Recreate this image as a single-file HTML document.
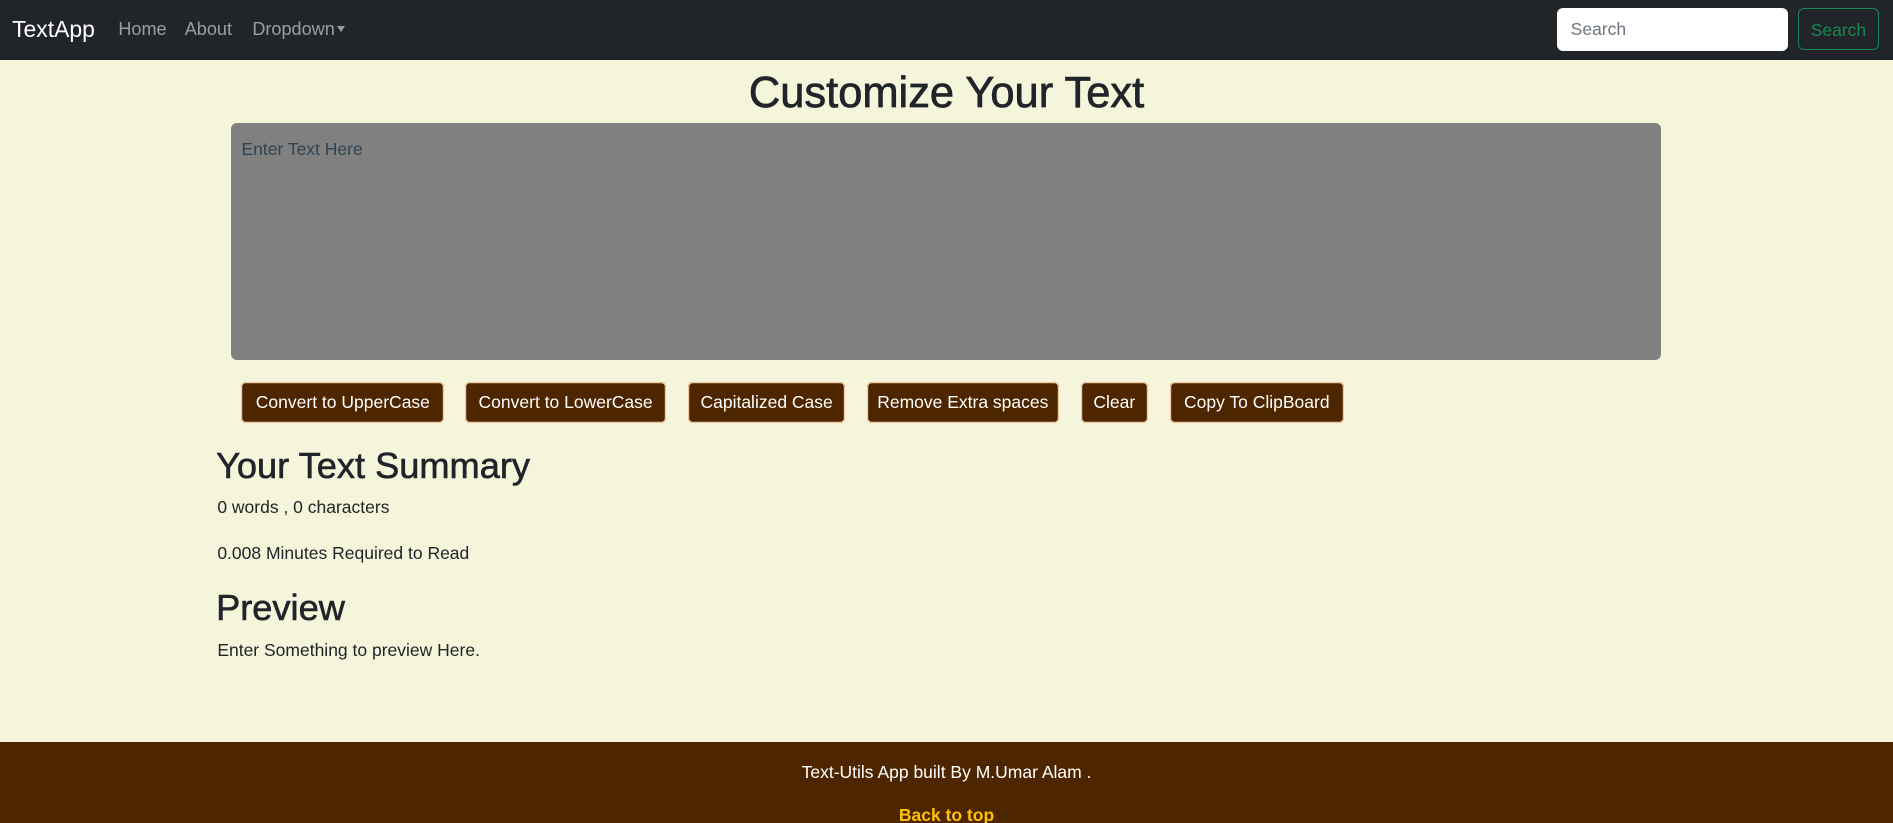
<!DOCTYPE html>
<html><head><meta charset="utf-8"><style>
html,body{margin:0;padding:0;width:1893px;height:823px;overflow:hidden;background:#f5f5dc;}
#w{zoom:1.2073;width:1568px;height:682px;position:relative;font-family:"Liberation Sans",sans-serif;color:#212529;}
.a{position:absolute;white-space:nowrap;}
nav{position:absolute;left:0;top:0;width:1568px;height:50px;background:#212529;}
.lnk{color:rgba(255,255,255,.55);font-size:15px;top:16px;}
.btn{position:absolute;top:316px;height:34px;background:#4d2600;color:#fff;border-radius:4px;font-size:14.5px;text-align:center;line-height:34px;box-shadow:0 0 0 1px #f2c9a0 inset;}
footer{position:absolute;left:0;top:615px;width:1568px;height:67px;background:#4d2600;}
</style></head><body><div id="w">
<nav>
<div class="a" style="left:10px;top:13px;color:#fff;font-size:19px;">TextApp</div>
<div class="a lnk" style="left:98px">Home</div>
<div class="a lnk" style="left:153px">About</div>
<div class="a lnk" style="left:209px">Dropdown <span style="display:inline-block;border-top:5px solid rgba(255,255,255,.55);border-left:4px solid transparent;border-right:4px solid transparent;vertical-align:3px;margin-left:-2px"></span></div>
<div class="a" style="left:1290px;top:7px;width:191px;height:35px;background:#fff;border-radius:5px;"><span class="a" style="left:11px;top:9px;font-size:14.5px;color:#6c757d">Search</span></div>
<div class="a" style="left:1489px;top:7px;width:66px;height:33px;border:1px solid #198754;border-radius:5px;"><span class="a" style="left:10px;top:9px;font-size:14.5px;color:#198754">Search</span></div>
</nav>
<div class="a" style="left:0;width:1568px;text-align:center;top:57px;font-size:36px;-webkit-text-stroke:0.6px #212529;">Customize Your Text</div>
<div class="a" style="left:191px;top:102px;width:1185px;height:196px;background:#808080;border-radius:5px;"><span class="a" style="left:9px;top:13px;font-size:14.5px;color:#2e4453">Enter Text Here</span></div>
<div class="btn" style="left:200px;width:168px">Convert to UpperCase</div>
<div class="btn" style="left:385px;width:167px">Convert to LowerCase</div>
<div class="btn" style="left:570px;width:130px">Capitalized Case</div>
<div class="btn" style="left:718px;width:159px">Remove Extra spaces</div>
<div class="btn" style="left:895px;width:56px">Clear</div>
<div class="btn" style="left:969px;width:144px">Copy To ClipBoard</div>
<div class="a" style="left:179px;top:369px;font-size:30px;-webkit-text-stroke:0.5px #212529;">Your Text Summary</div>
<div class="a" style="left:180px;top:412px;font-size:14.5px;">0 words , 0 characters</div>
<div class="a" style="left:180px;top:450px;font-size:14.5px;">0.008 Minutes Required to Read</div>
<div class="a" style="left:179px;top:486px;font-size:30px;-webkit-text-stroke:0.5px #212529;">Preview</div>
<div class="a" style="left:180px;top:530px;font-size:14.5px;">Enter Something to preview Here.</div>
<footer>
<div class="a" style="left:0;width:1568px;text-align:center;top:16px;color:#fff;font-size:14.5px;">Text-Utils App built By M.Umar Alam .</div>
<div class="a" style="left:0;width:1568px;text-align:center;top:52px;color:#ffc107;font-size:14.5px;font-weight:bold;">Back to top</div>
</footer>
</div></body></html>
